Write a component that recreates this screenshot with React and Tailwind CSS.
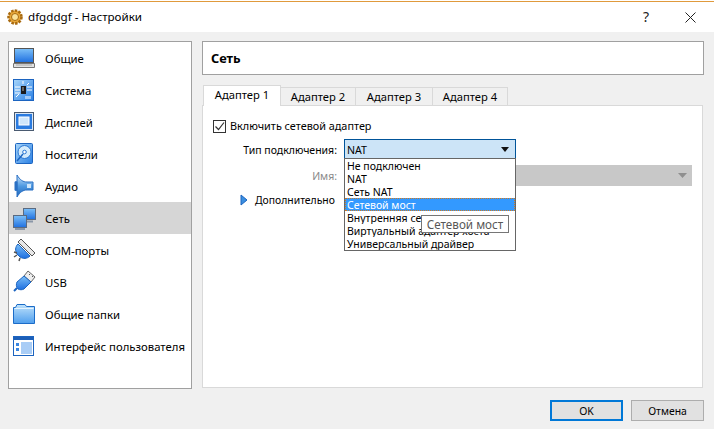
import React from 'react';

const Defs = () => (
  <svg width="0" height="0" className="absolute">
    <defs>
      <linearGradient id="blue" x1="0" y1="0" x2="0" y2="1">
        <stop offset="0" stopColor="#7cc0f8" />
        <stop offset="1" stopColor="#1e6fe0" />
      </linearGradient>
      <linearGradient id="blue2" x1="0" y1="0" x2="1" y2="1">
        <stop offset="0" stopColor="#a8d6fa" />
        <stop offset="1" stopColor="#2a80e4" />
      </linearGradient>
      <linearGradient id="folder" x1="0" y1="0" x2="0" y2="1">
        <stop offset="0" stopColor="#bfe2fb" />
        <stop offset="1" stopColor="#4f9fee" />
      </linearGradient>
      <linearGradient id="horn" x1="0" y1="0" x2="0" y2="1">
        <stop offset="0" stopColor="#cfe6fa" />
        <stop offset="0.5" stopColor="#4f9ae2" />
        <stop offset="1" stopColor="#1c62b8" />
      </linearGradient>
    </defs>
  </svg>
);

const GeneralIcon = () => (
  <svg className="shrink-0" width="24" height="24" viewBox="0 0 24 24">
    <rect x="2.5" y="2.5" width="19" height="14" fill="url(#blue)" stroke="#555" />
    <path d="M1.5 17.5h21v4h-21z" fill="#e2e2e2" stroke="#777" />
    <path d="M4 19h16" stroke="#aaa" />
  </svg>
);

const SystemIcon = () => (
  <svg className="shrink-0" width="24" height="24" viewBox="0 0 24 24">
    <rect x="1.5" y="1.5" width="20" height="21" fill="url(#blue2)" stroke="#1c64c0" />
    <path d="M3 9h5M3 12h5M3 15h5M15 9h5M15 12h5M4 19l3-3M17 5l-2 2M14 18v3M16 18v3M18 18v3M11 3v3" stroke="#fff" />
    <rect x="9" y="8" width="5" height="8" fill="#1a1a1a" />
    <rect x="10" y="9" width="2" height="4" fill="#666" />
  </svg>
);

const DisplayIcon = () => (
  <svg className="shrink-0" width="24" height="24" viewBox="0 0 24 24">
    <rect x="2.5" y="2.5" width="19" height="18" fill="#d9e6f4" stroke="#4a5a70" />
    <rect x="4" y="4" width="16" height="15" fill="#2a7be0" />
    <rect x="7" y="7" width="10" height="8" fill="#cfe6fb" stroke="#fff" />
  </svg>
);

const StorageIcon = () => (
  <svg className="shrink-0" width="24" height="24" viewBox="0 0 24 24">
    <rect x="3.5" y="1.5" width="17" height="20" rx="1" fill="url(#blue2)" stroke="#1c64c0" />
    <circle cx="12.5" cy="10" r="6.5" fill="#d4ebfc" stroke="#2a78d4" />
    <circle cx="12.5" cy="10" r="1.8" fill="#fff" stroke="#2a78d4" />
    <path d="M5 19l6-7" stroke="#1c64c0" strokeWidth="1.5" />
  </svg>
);

const AudioIcon = () => (
  <svg className="shrink-0" width="24" height="24" viewBox="0 0 24 24">
    <path d="M5 1c3 5 6 7 10 7h6v8h-6c-4 0-7 2-10 7z" fill="url(#horn)" stroke="#2a70c4" />
    <rect x="2.5" y="7" width="3" height="10" rx="1.5" fill="#2a70c4" />
    <path d="M15 10h4v4h-4z" fill="#cfe6fa" />
  </svg>
);

const NetworkIcon = () => (
  <svg className="shrink-0" width="24" height="24" viewBox="0 0 24 24">
    <rect x="11.5" y="2.5" width="12" height="11" fill="url(#blue)" stroke="#5a6a80" />
    <path d="M13 15.5h8" stroke="#8a97a8" strokeWidth="2" />
    <rect x="1.5" y="9.5" width="13" height="12" fill="url(#blue)" stroke="#5a6a80" />
    <path d="M3 23h10" stroke="#8a97a8" strokeWidth="2" />
  </svg>
);

const ComIcon = () => (
  <svg className="shrink-0" width="24" height="24" viewBox="0 0 24 24">
    <path d="M9 1l14 14-3 3L6 4z" fill="#e8e8e8" stroke="#555" />
    <path d="M6 6l12 12c-3 3-7 3-10 1l-3-3c-2-3-2-7 1-10z" fill="url(#blue)" stroke="#1c64c0" />
    <path d="M5 17l-3 2M2 14l3 1M8 20l-1 3" stroke="#555" strokeWidth="1.5" />
  </svg>
);

const UsbIcon = () => (
  <svg className="shrink-0" width="24" height="24" viewBox="0 0 24 24">
    <path d="M16 1l7 6-4 5-7-6z" fill="#eee" stroke="#666" />
    <path d="M17 4l1 1M20 6l1 1" stroke="#555" />
    <path d="M12 6l7 6-7 7c-2 1-4 1-6 0-2-2-2-5-1-7z" fill="url(#blue)" stroke="#1c64c0" />
    <path d="M5 18l-3 3" stroke="#1c64c0" strokeWidth="2" />
  </svg>
);

const FolderIcon = () => (
  <svg className="shrink-0" width="24" height="24" viewBox="0 0 24 24">
    <path d="M1.5 5.5V21.5h21V4.5h-8l-1.5-2H5L3.5 5.5z" fill="url(#folder)" stroke="#1c6cc8" />
    <path d="M2.5 6.5h19" stroke="#e6f4fe" />
  </svg>
);

const InterfaceIcon = () => (
  <svg className="shrink-0" width="24" height="24" viewBox="0 0 24 24">
    <rect x="1.5" y="2.5" width="20" height="19" fill="#fff" stroke="#1c64c0" />
    <rect x="2" y="3" width="19" height="3" fill="#1c5fb8" />
    <rect x="9" y="8" width="11" height="12" fill="#a9cdf6" />
    <rect x="4" y="9" width="3" height="3" fill="#3a86e0" />
    <rect x="4" y="14" width="3" height="3" fill="#3a86e0" />
  </svg>
);

const sections = [
  { label: 'Общие', Icon: GeneralIcon },
  { label: 'Система', Icon: SystemIcon },
  { label: 'Дисплей', Icon: DisplayIcon },
  { label: 'Носители', Icon: StorageIcon },
  { label: 'Аудио', Icon: AudioIcon },
  { label: 'Сеть', Icon: NetworkIcon, active: true },
  { label: 'COM-порты', Icon: ComIcon },
  { label: 'USB', Icon: UsbIcon },
  { label: 'Общие папки', Icon: FolderIcon },
  { label: 'Интерфейс пользователя', Icon: InterfaceIcon },
];

const tabs = [
  { label: 'Адаптер 1', cls: 'relative z-10 pt-px w-[78px] h-[21px] -mb-px bg-white' },
  { label: 'Адаптер 2', cls: 'items-center -ml-px w-[76px] h-[18px] bg-[#f0f0f0]' },
  { label: 'Адаптер 3', cls: 'items-center -ml-px w-[78px] h-[18px] bg-[#f0f0f0]' },
  { label: 'Адаптер 4', cls: 'items-center -ml-px w-[76px] h-[18px] bg-[#f0f0f0]' },
];

const options = ['Не подключен', 'NAT', 'Сеть NAT', 'Сетевой мост', 'Внутренняя сеть', 'Виртуальный адаптер хоста', 'Универсальный драйвер'];

export default function App() {
  return (
    <div className="relative w-[714px] h-[429px] overflow-hidden bg-[#f0f0f0] text-[11px] leading-[16px] text-black font-['Noto_Sans',sans-serif]">
      <Defs />
      {/* title bar */}
      <div className="h-[32px] pt-px bg-white">
        <div className="h-px bg-[#e09a3c]" />
        <div className="flex items-center h-[30px] pl-[7px]">
          <svg className="shrink-0" width="16" height="16" viewBox="0 0 16 16">
            <circle cx="8" cy="8" r="6.5" fill="#e8a83a" stroke="#a86a10" strokeWidth="2.5" strokeDasharray="2.5 1.2" />
            <circle cx="8" cy="8" r="3.5" fill="#fbe29a" stroke="#a86a10" />
          </svg>
          <span className="ml-[5px] text-[11.6px]">dfgddgf - Настройки</span>
          <span className="ml-auto mr-[36px] text-[14px] text-[#222]">?</span>
          <svg className="mr-[18px] shrink-0" width="11" height="11" viewBox="0 0 11 11">
            <path d="M.5.5l10 10M10.5.5l-10 10" stroke="#222" />
          </svg>
        </div>
      </div>

      <div className="flex gap-[10px] pl-[8px] pt-[9px]">
        {/* sidebar */}
        <div className="w-[184px] h-[348px] bg-white border border-[#a0a0a0]">
          {sections.map(({ label, Icon, active }) => (
            <div key={label} className={`flex items-center h-[32px] pl-[3px] ${active ? 'bg-[#d6d6d6]' : ''}`}>
              <Icon />
              <span className="ml-[9px] pt-[2px] text-[11.35px] whitespace-nowrap">{label}</span>
            </div>
          ))}
        </div>

        <div className="w-[502px]">
          {/* page header */}
          <div className="flex items-center h-[34px] pl-[8px] bg-white border border-[#a0a0a0] text-[12.8px] font-bold">Сеть</div>

          {/* tabs */}
          <div className="flex h-[20px] mt-[10px] pl-px items-end text-[11.2px]">
            {tabs.map(({ label, cls }) => (
              <div key={label} className={`flex justify-center border border-b-0 border-[#d9d9d9] ${cls}`}>
                {label}
              </div>
            ))}
          </div>

          {/* tab pane */}
          <div className="relative w-[501px] h-[283px] bg-white border border-[#d9d9d9] pl-[10px] pt-[13px]">
            <div className="flex items-center h-[14px]">
              <div className="flex items-center justify-center w-[13px] h-[13px] border border-[#333] bg-white">
                <svg width="11" height="11" viewBox="0 0 11 11">
                  <path d="M1.5 5.5l3 3 5.5-7" fill="none" stroke="#333" strokeWidth="1.2" />
                </svg>
              </div>
              <span className="ml-[4px] text-[10.85px]">Включить сетевой адаптер</span>
            </div>

            <div className="flex items-center mt-[6px] h-[21px]">
              <span className="w-[124px] text-right text-[10.5px]">Тип подключения:</span>
              <div className="flex items-center justify-between ml-[7px] w-[172px] h-[21px] pl-[2px] pr-[6px] bg-[#cce4f7] border border-[#005499] text-[10.6px]">
                <span>NAT</span>
                <svg width="8" height="5" viewBox="0 0 8 5"><path d="M0 0h8L4 5z" fill="#111" /></svg>
              </div>
            </div>

            <div className="flex items-center mt-[5px] h-[21px]">
              <span className="w-[124px] text-right text-[10.5px] text-[#8a8a8a]">Имя:</span>
              <div className="flex items-center justify-end ml-[7px] w-[348px] h-[21px] pr-[5px] bg-[#c8c8c8]">
                <svg width="9" height="5" viewBox="0 0 9 5"><path d="M0 0h9L4.5 5z" fill="#8f8f8f" /></svg>
              </div>
            </div>

            <div className="flex items-center mt-[4px] h-[20px] pl-[27px]">
              <svg width="8" height="12" viewBox="0 0 8 12">
                <path d="M1 1l6 5-6 5z" fill="#3a8fe0" stroke="#1c64c0" />
              </svg>
              <span className="ml-[7px] text-[10.4px]">Дополнительно</span>
            </div>

            {/* open combo list */}
            <div className="absolute left-[141px] top-[52px] w-[172px] h-[93px] bg-white border border-[#666] text-[10.5px]">
              {options.map((option, i) => (
                <div
                  key={option}
                  className={`h-[13px] pl-[2px] leading-[15px] whitespace-nowrap overflow-hidden ${i === 3 ? 'bg-[#3399ff] text-white outline-1 outline-dotted -outline-offset-1 outline-[#d07a20]' : ''}`}
                >
                  {option}
                </div>
              ))}
            </div>

            {/* tooltip */}
            <div className="absolute left-[218px] top-[109px] flex items-center justify-center w-[88px] h-[18px] bg-white border border-[#767676] text-[11.7px] text-[#575757]">
              Сетевой мост
            </div>
          </div>
        </div>
      </div>

      {/* dialog buttons */}
      <div className="flex justify-end gap-[8px] pr-[10px] mt-[11px] text-[10.4px]">
        <button className="w-[73px] h-[21px] bg-[#e1e1e1] border-2 border-[#0078d7]">OK</button>
        <button className="w-[73px] h-[21px] bg-[#e1e1e1] border border-[#adadad]">Отмена</button>
      </div>
    </div>
  );
}
